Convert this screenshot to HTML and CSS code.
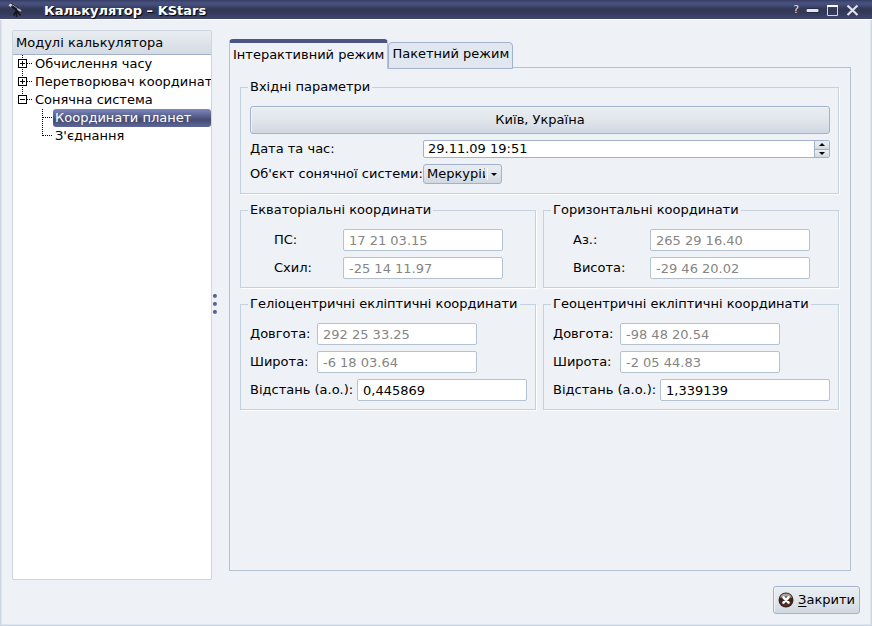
FILE: index.html
```html
<!DOCTYPE html>
<html lang="uk">
<head>
<meta charset="utf-8">
<meta name="viewport" content="width=device-width, initial-scale=1">
<title>Калькулятор – KStars</title>
<link rel="stylesheet" href="styles.css">
</head>
<body>
<div class="window">
  <header class="titlebar">
    <svg class="app-icon" width="16" height="16" viewBox="0 0 16 16" aria-hidden="true">
      <path d="M1.500 3L4 1L12 6.500L10.500 10Z" fill="#17181c"/>
      <path d="M1.500 3.200L3.500 1.500L5.500 2.700L3.500 5Z" fill="#d9dce0"/>
      <path d="M5 4.500L6 3.300L11 6.800" stroke="#9a9da4" fill="none"/>
      <path d="M9.500 8.500L6.500 13.500M9.500 9V15M10 9L13.500 13.500" stroke="#15161a" fill="none" stroke-width="1.600"/>
      <path d="M10.500 7L14 9" stroke="#b8bbc2" stroke-width="2"/>
    </svg>
    <h1 class="title">Калькулятор – KStars</h1>
    <div class="window-buttons">
      <button class="wbtn wbtn-help" type="button" aria-label="Довідка">?</button>
      <button class="wbtn" type="button" aria-label="Мінімізувати"><svg width="13" height="13" viewBox="0 0 13 13"><rect x="0" y="5" width="13" height="5" rx="1.500" fill="#252a48"/><rect x="0.500" y="6" width="12" height="3" rx="1" fill="#e3e7e9"/></svg></button>
      <button class="wbtn" type="button" aria-label="Максимізувати"><svg width="13" height="13" viewBox="0 0 13 13"><path d="M1.500 2V12.500H11.500V2" fill="none" stroke="#d3d5da"/><path d="M1 3H12" stroke="#fff" stroke-width="2"/></svg></button>
      <button class="wbtn" type="button" aria-label="Закрити вікно"><svg width="13" height="13" viewBox="0 0 13 13"><path d="M1.500 2.500L11.500 12M11.500 2.500L1.500 12" stroke="#e2e4e8" stroke-width="2.200"/></svg></button>
    </div>
  </header>

  <main class="content">
    <nav class="tree" aria-label="Модулі калькулятора">
      <h2 class="tree-header">Модулі калькулятора</h2>
      <ul class="tree-list">
        <li><a class="node" href="#time">
          <svg width="22" height="18" viewBox="0 0 22 18" aria-hidden="true"><path class="dots" d="M9.500 0V18M14 8.500H20"/><rect class="box" x="5.500" y="4.500" width="8" height="8" rx="1"/><path class="sign" d="M7 8.500H12M9.500 6V11"/></svg><span class="node-label">Обчислення часу</span></a></li>
        <li><a class="node" href="#convert">
          <svg width="22" height="18" viewBox="0 0 22 18" aria-hidden="true"><path class="dots" d="M9.500 0V18M14 8.500H20"/><rect class="box" x="5.500" y="4.500" width="8" height="8" rx="1"/><path class="sign" d="M7 8.500H12M9.500 6V11"/></svg><span class="node-label">Перетворювач координат</span></a></li>
        <li><a class="node" href="#solar">
          <svg width="22" height="18" viewBox="0 0 22 18" aria-hidden="true"><path class="dots" d="M9.500 0V4M14 8.500H20"/><rect class="box" x="5.500" y="4.500" width="8" height="8" rx="1"/><path class="sign" d="M7 8.500H12"/></svg><span class="node-label">Сонячна система</span></a>
          <ul class="tree-list tree-children">
            <li><a class="node" href="#planets" aria-current="page">
              <svg width="12" height="18" viewBox="0 0 12 18" aria-hidden="true"><path class="dots" d="M1.500 0V18M2 8.500H12"/></svg><span class="node-label selected">Координати планет</span></a></li>
            <li><a class="node" href="#conjunctions">
              <svg width="12" height="18" viewBox="0 0 12 18" aria-hidden="true"><path class="dots" d="M1.500 0V9M2 8.500H12"/></svg><span class="node-label">З'єднання</span></a></li>
          </ul>
        </li>
      </ul>
    </nav>

    <div class="splitter" role="separator" aria-orientation="vertical"><i class="grip"></i><i class="grip"></i><i class="grip"></i></div>

    <section class="tabs">
      <div class="tab-bar" role="tablist">
        <button class="tab tab-active" type="button" role="tab" aria-selected="true" aria-controls="panel">Інтерактивний режим</button>
        <button class="tab" type="button" role="tab" aria-selected="false">Пакетний режим</button>
      </div>
      <div class="tab-panel" id="panel" role="tabpanel">
        <fieldset class="group group-input">
          <legend>Вхідні параметри</legend>
          <button class="btn btn-location" type="button">Київ, Україна</button>
          <label for="date">Дата та час:</label>
          <div class="spinbox">
            <input class="spin-text" id="date" type="text" value="29.11.09 19:51">
            <div class="spin-buttons">
              <button type="button" aria-label="Більше"><svg width="6" height="3" viewBox="0 0 6 3"><path d="M0 3L3 0L6 3Z"/></svg></button>
              <button type="button" aria-label="Менше"><svg width="6" height="3" viewBox="0 0 6 3"><path d="M0 0L3 3L6 0Z"/></svg></button>
            </div>
          </div>
          <label for="object">Об'єкт сонячної системи:</label>
          <div class="combo">
            <select id="object"><option>Меркурій</option></select>
            <svg class="combo-arrow" width="6" height="3" viewBox="0 0 6 3" aria-hidden="true"><path d="M0 0L3 3L6 0Z"/></svg>
          </div>
        </fieldset>

        <div class="group-grid">
          <fieldset class="group">
            <legend>Екваторіальні координати</legend>
            <div class="centered equatorial">
              <label for="ra">ПС:</label><input class="field" id="ra" value="17 21 03.15" disabled>
              <label for="dec">Схил:</label><input class="field" id="dec" value="-25 14 11.97" disabled>
            </div>
          </fieldset>
          <fieldset class="group">
            <legend>Горизонтальні координати</legend>
            <div class="centered horizontal">
              <label for="az">Аз.:</label><input class="field" id="az" value="265 29 16.40" disabled>
              <label for="alt">Висота:</label><input class="field" id="alt" value="-29 46 20.02" disabled>
            </div>
          </fieldset>
          <fieldset class="group">
            <legend>Геліоцентричні екліптичні координати</legend>
            <div class="rows">
              <div class="row"><label class="angle" for="hlon">Довгота:</label><input class="field" id="hlon" value="292 25 33.25" disabled></div>
              <div class="row"><label class="angle" for="hlat">Широта:</label><input class="field" id="hlat" value="-6 18 03.64" disabled></div>
              <div class="row"><label class="distance" for="hdist">Відстань (а.о.):</label><input class="field field-wide" id="hdist" value="0,445869"></div>
            </div>
          </fieldset>
          <fieldset class="group">
            <legend>Геоцентричні екліптичні координати</legend>
            <div class="rows">
              <div class="row"><label class="angle" for="glon">Довгота:</label><input class="field" id="glon" value="-98 48 20.54" disabled></div>
              <div class="row"><label class="angle" for="glat">Широта:</label><input class="field" id="glat" value="-2 05 44.83" disabled></div>
              <div class="row"><label class="distance" for="gdist">Відстань (а.о.):</label><input class="field field-wide" id="gdist" value="1,339139"></div>
            </div>
          </fieldset>
        </div>
      </div>
    </section>
  </main>

  <footer class="footer">
    <button class="btn btn-close" type="button">
      <svg width="16" height="16" viewBox="0 0 16 16" aria-hidden="true">
        <circle cx="8" cy="8" r="7.500" fill="#3b2320"/>
        <path d="M2 6A6.300 6.300 0 0 1 14 6Q8 3 2 6Z" fill="#a9a3a0"/>
        <path d="M2.500 10A6 6 0 0 0 13.500 10Q8 15 2.500 10Z" fill="#6b3a2f"/>
        <path d="M5.500 5.500L10.500 10.500M10.500 5.500L5.500 10.500" stroke="#fff" stroke-width="2.600" stroke-linecap="round"/>
      </svg>
      <span><u>З</u>акрити</span>
    </button>
  </footer>
</div>
</body>
</html>
```

FILE: styles.css
```css
:root {
  --bg: #eef1f6;
  --edge: #a3b1cd;
  --frame: #b5c3d0;
  --group: #c4d2df;
  --raised: linear-gradient(#e9edf1, #e2e7ec 45%, #d0d8e1);
}

* { box-sizing: border-box; }

body {
  margin: 0;
  background: var(--bg);
  color: #000;
  font: 13px/16px "DejaVu Sans", sans-serif;
}

button, input, select { font: inherit; color: inherit; margin: 0; }
label { white-space: nowrap; }

.window {
  display: flex;
  flex-direction: column;
  min-height: 100vh;
  border: solid #cdd6e0;
  border-width: 0 1px 1px;
  box-shadow: inset 1px -1px #e0e6ee, inset -1px 0 #e0e6ee;
}

/* Title bar */
.titlebar {
  display: flex;
  align-items: center;
  height: 20px;
  margin: 0 -1px;
  padding: 0 13px 0 7px;
  border-bottom: 1px solid #fff;
  background: linear-gradient(#353c62 0, #454d78 2px, #475080 4px, #323854 9px, #343a5a 13px, #40476d 19px);
}

.app-icon { margin-right: 21px; }

.title {
  flex: 1;
  margin: 0;
  padding-top: 2px;
  color: #fff;
  font-size: 13px;
  text-shadow: 1px 1px 1px #000;
}

.window-buttons { display: flex; align-items: center; gap: 7px; }

.wbtn { display: flex; padding: 0; border: 0; background: none; color: #dfe2e8; }
.wbtn-help { font-size: 11px; }

/* Main area */
.content {
  flex: 1;
  display: flex;
  padding: 10px 20px 0 11px;
}

.tree {
  width: 200px;
  margin-bottom: 6px;
  border: 1px solid #cdd6df;
  border-radius: 2px;
  background: #fff;
  overflow: hidden;
}

.tree-header {
  margin: 0;
  padding: 4px 3px 3px;
  border-bottom: 1px solid var(--edge);
  background: linear-gradient(#e9edf1, #d3dbe3);
  font-size: 13px;
  font-weight: normal;
}

.tree-list { margin: 0; padding: 0; list-style: none; }
.tree-children { padding-left: 28px; }

.node { display: flex; color: #000; line-height: 18px; text-decoration: none; white-space: nowrap; }
.node svg { flex: none; shape-rendering: crispEdges; }
.node-label { flex: 1; }
.tree-children .node-label { padding-left: 2px; border-radius: 3px; }
.selected { color: #fff; background: linear-gradient(#7d88bd, #666fa0 25%, #464c70 60%, #5d679a); }

.dots { fill: none; stroke: #000; stroke-dasharray: 1 1; }
.box { fill: #fff; stroke: #000; }
.sign { stroke: #000; }

.splitter {
  display: flex;
  flex-direction: column;
  justify-content: center;
  gap: 4px;
  width: 17px;
  padding: 0 0 8px 1px;
}

.grip { width: 4px; height: 4px; border-radius: 2px; background: linear-gradient(135deg, #353b60, #7a85bb); }

.tabs {
  flex: 1;
  display: flex;
  flex-direction: column;
  min-width: 0;
  padding: 9px 0 15px;
}

.tab-bar { display: flex; align-items: flex-start; height: 28px; }

.tab {
  height: 27px;
  margin-top: 3px;
  padding: 0 3px 3px;
  border: 1px solid var(--edge);
  border-radius: 4px 4px 0 0;
  background: #e1e7ef;
  white-space: nowrap;
  z-index: 1;
}

.tab-active {
  height: 30px;
  margin-top: 0;
  border-color: var(--frame);
  border-top: 4px solid #4c5385;
  border-bottom: 0;
  background: var(--bg);
}

.tab-panel {
  flex: 1;
  padding: 11px 11px 11px 10px;
  border: 1px solid var(--frame);
}

/* Group boxes */
.group {
  min-width: 0;
  margin: 0;
  padding: 11px 8px 8px 9px;
  border: 1px solid var(--group);
  box-shadow: 1px 1px #fff;
}

.group legend { margin-left: -2px; padding: 0 2px; }

.group-input {
  display: grid;
  grid-template-columns: 167px 1fr;
  gap: 6px;
  align-items: center;
  padding-bottom: 9px;
}

.group-grid {
  display: grid;
  grid-template-columns: 1fr 1fr;
  gap: 8px 7px;
  margin-top: 8px;
}

.btn {
  border: 1px solid var(--edge);
  border-radius: 3px;
  background: var(--raised);
  box-shadow: inset 1px 1px #f2f5f8;
}

.btn-location { grid-column: 1 / -1; height: 28px; }

.spinbox {
  display: flex;
  height: 18px;
  border: 1px solid var(--edge);
  border-radius: 2px;
  background: #fff;
}

.spin-text { flex: 1; min-width: 0; padding: 0 4px; border: 0; background: none; }

.spin-buttons { display: flex; flex-direction: column; width: 15px; border-left: 1px solid var(--edge); }
.spin-buttons button {
  flex: 1;
  display: flex;
  align-items: center;
  justify-content: center;
  padding: 0;
  border: 0;
  background: var(--raised);
}
.spin-buttons button + button { border-top: 1px solid var(--edge); }

.combo { position: relative; width: 79px; height: 20px; }
.combo select {
  display: block;
  width: 100%;
  height: 100%;
  padding: 0 16px 0 3px;
  border: 1px solid var(--edge);
  border-radius: 3px;
  background: linear-gradient(#f6f8fa, #f6f8fa) right 13px center / 1px 12px no-repeat, var(--raised);
  appearance: none;
}
.combo-arrow { position: absolute; right: 5px; top: 9px; pointer-events: none; }

.field {
  width: 160px;
  height: 22px;
  padding: 0 5px;
  border: 1px solid var(--frame);
  border-radius: 2px;
  background: #fff;
}
.field:disabled { color: #858585; }
.field-wide { flex: 1; min-width: 0; }

.centered { display: grid; justify-content: center; align-items: center; row-gap: 6px; }
.equatorial { grid-template-columns: 69px 160px; }
.horizontal { grid-template-columns: 77px 160px; }

.rows { display: flex; flex-direction: column; gap: 6px; }
.row { display: flex; align-items: center; }
.angle { width: 67px; }
.distance { width: 107px; }

.footer { display: flex; justify-content: flex-end; padding: 0 11px 11px; }

.btn-close { display: flex; align-items: center; gap: 4px; height: 28px; padding: 0 4px; }
.btn-close u { text-underline-offset: 2px; }
```
